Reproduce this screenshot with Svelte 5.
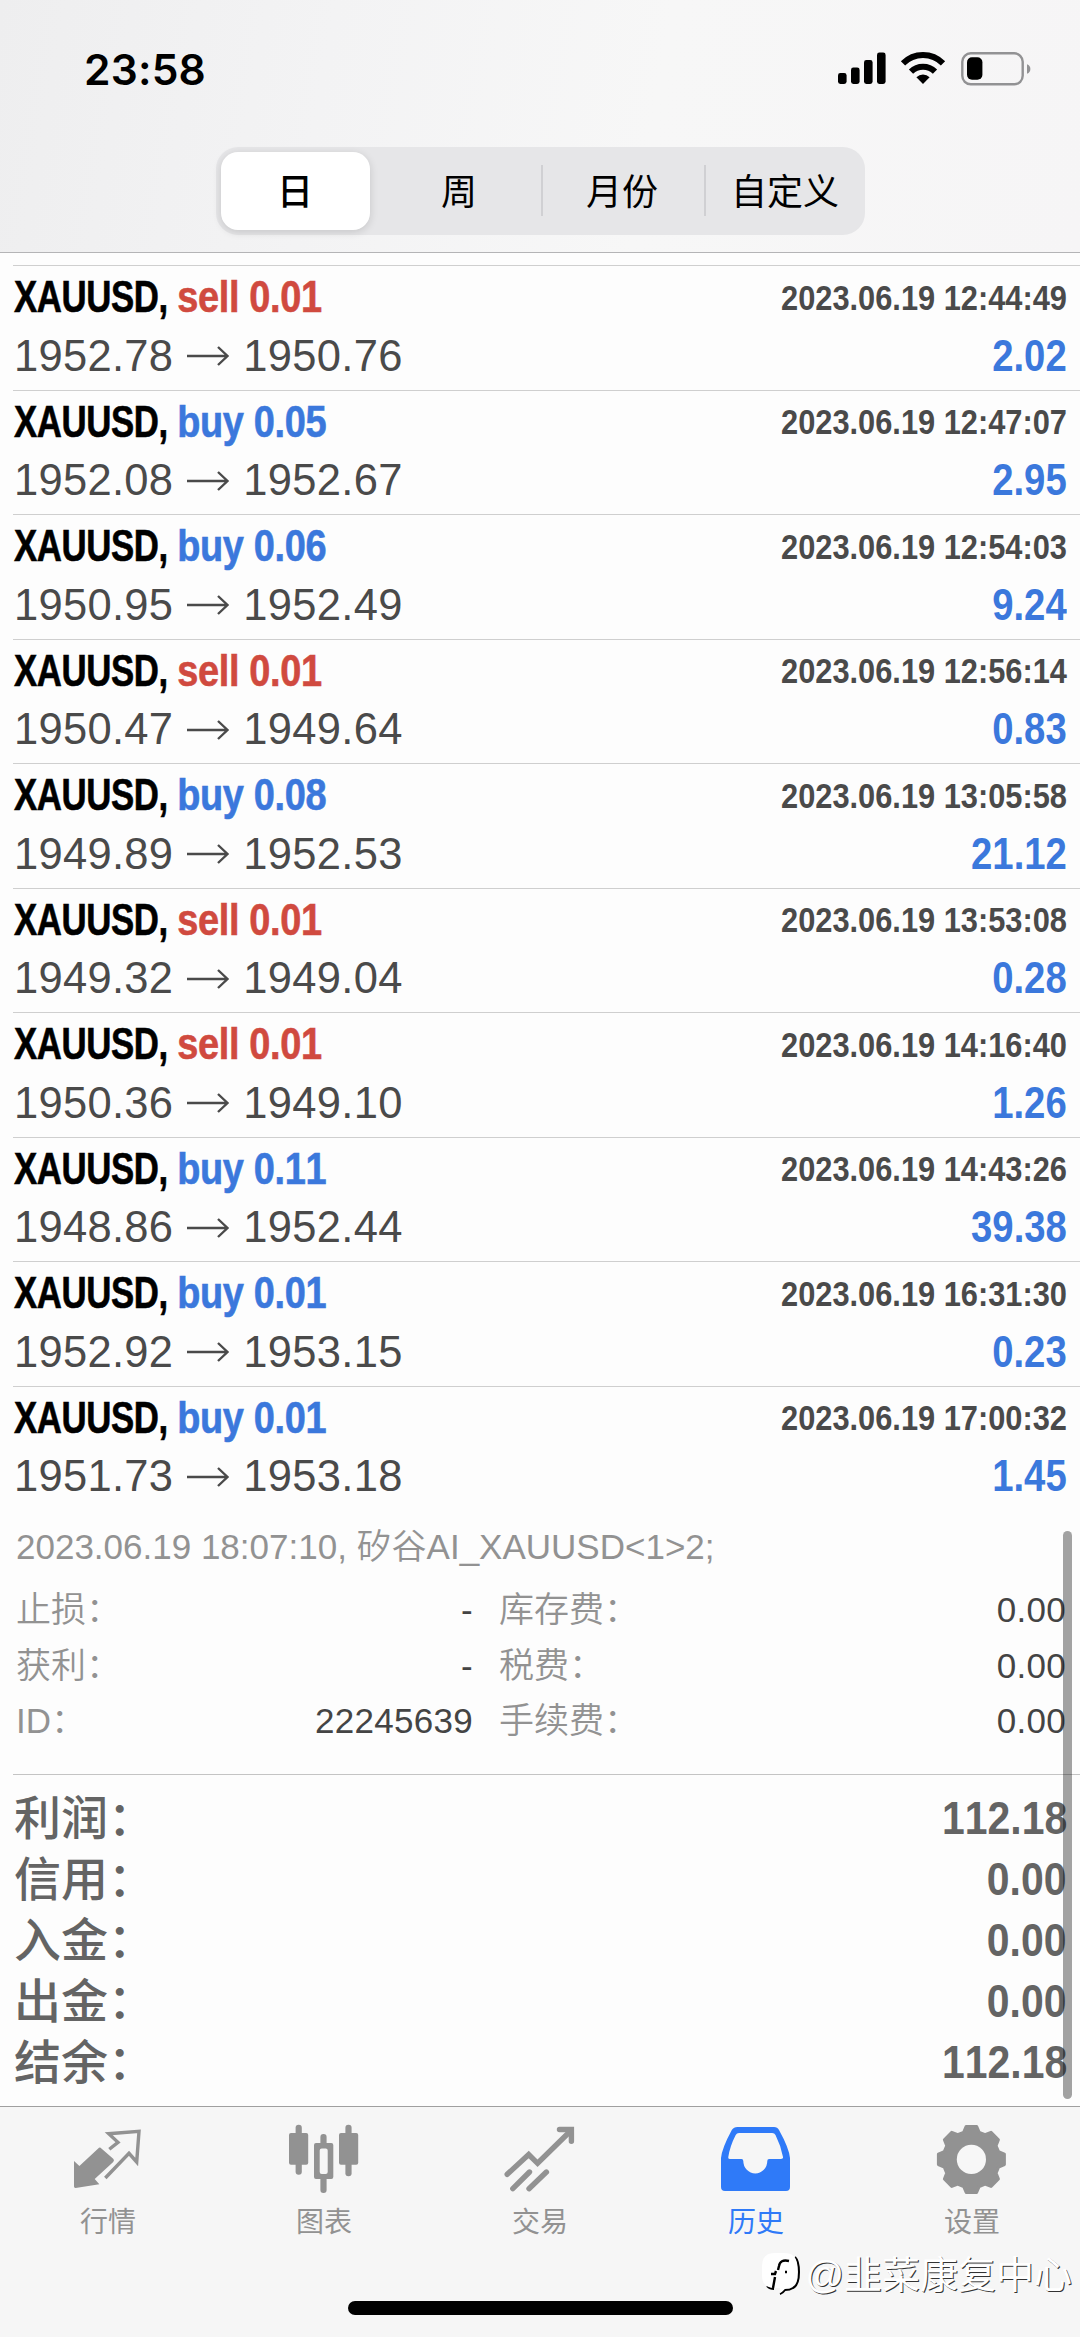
<script lang="ts">
    type Deal = {
        side: "buy" | "sell";
        volume: string;
        open: string;
        close: string;
        time: string;
        profit: string;
    };

    const periods = ["日", "周", "月份", "自定义"];
    let period = $state(0);

    const deals: Deal[] = [
        { side: "sell", volume: "0.01", open: "1952.78", close: "1950.76", time: "12:44:49", profit: "2.02" },
        { side: "buy", volume: "0.05", open: "1952.08", close: "1952.67", time: "12:47:07", profit: "2.95" },
        { side: "buy", volume: "0.06", open: "1950.95", close: "1952.49", time: "12:54:03", profit: "9.24" },
        { side: "sell", volume: "0.01", open: "1950.47", close: "1949.64", time: "12:56:14", profit: "0.83" },
        { side: "buy", volume: "0.08", open: "1949.89", close: "1952.53", time: "13:05:58", profit: "21.12" },
        { side: "sell", volume: "0.01", open: "1949.32", close: "1949.04", time: "13:53:08", profit: "0.28" },
        { side: "sell", volume: "0.01", open: "1950.36", close: "1949.10", time: "14:16:40", profit: "1.26" },
        { side: "buy", volume: "0.11", open: "1948.86", close: "1952.44", time: "14:43:26", profit: "39.38" },
        { side: "buy", volume: "0.01", open: "1952.92", close: "1953.15", time: "16:31:30", profit: "0.23" },
        { side: "buy", volume: "0.01", open: "1951.73", close: "1953.18", time: "17:00:32", profit: "1.45" },
    ];

    const details = [
        ["止损：", "-", "库存费：", "0.00"],
        ["获利：", "-", "税费：", "0.00"],
        ["ID：", "22245639", "手续费：", "0.00"],
    ];

    const totals = [
        ["利润：", "112.18"],
        ["信用：", "0.00"],
        ["入金：", "0.00"],
        ["出金：", "0.00"],
        ["结余：", "112.18"],
    ];

    const tabs = [
        { id: "quotes", label: "行情" },
        { id: "charts", label: "图表" },
        { id: "trade", label: "交易" },
        { id: "history", label: "历史" },
        { id: "settings", label: "设置" },
    ];
    let tab = $state("history");

    // eight teeth: two points on the tip, two in the valley
    const gear = Array.from({ length: 8 }, (_, i) => i * 45)
        .flatMap((a) => [
            [a - 9, 33.4],
            [a + 9, 33.4],
            [a + 16, 28.2],
            [a + 29, 28.2],
        ])
        .map(([a, r]) => {
            const t = (a * Math.PI) / 180;
            return `${(35.4 + r * Math.sin(t)).toFixed(2)},${(35.4 - r * Math.cos(t)).toFixed(2)}`;
        })
        .join(" ");
</script>

<div class="screen">
    <header>
        <div class="status">
            <span class="clock">23:58</span>
            <svg width="194" height="36" viewBox="0 0 194 36">
                <rect x="1" y="22" width="8.6" height="11" rx="2.4" />
                <rect x="14" y="16.5" width="8.6" height="16.5" rx="2.4" />
                <rect x="27" y="9" width="8.6" height="24" rx="2.4" />
                <rect x="40" y="1.5" width="8.6" height="31.5" rx="2.4" />
                <g fill="none" stroke="#000" stroke-width="6">
                    <path d="M66 12.4a28 28 0 0 1 40 0" />
                    <path d="M74 20.6a17 17 0 0 1 24 0" />
                </g>
                <path d="M86 33l-6.600-6.800a9.600 9.600 0 0 1 13.200 0z" />
                <rect x="125.3" y="2.3" width="60.4" height="31" rx="8.5" fill="none" stroke="#929294" stroke-width="2.4" />
                <rect x="130" y="6.2" width="15.4" height="22.6" rx="5" />
                <path d="M190 13.2c2.4 1 3.4 2.6 3.4 4.8s-1 3.8-3.4 4.8z" fill="#929294" />
            </svg>
        </div>
        <div class="segments">
            {#each periods as name, i}
                <button class="segment" class:active={period === i} onclick={() => (period = i)}>{name}</button>
            {/each}
        </div>
    </header>

    <main>
        {#each deals as deal}
            <section class="deal">
                <div class="head">
                    <div class="symbol">XAUUSD, <span class="side {deal.side}">{deal.side} {deal.volume}</span></div>
                    <div class="time">2023.06.19 {deal.time}</div>
                </div>
                <div class="body">
                    <div class="prices">
                        <span>{deal.open}</span>
                        <svg width="44" height="22" viewBox="0 0 44 22">
                            <path d="M1 11H41M32 2l9.5 9-9.5 9" />
                        </svg>
                        <span>{deal.close}</span>
                    </div>
                    <div class="profit">{deal.profit}</div>
                </div>
            </section>
        {/each}

        <section class="details">
            <div class="comment">2023.06.19 18:07:10, 矽谷AI_XAUUSD&lt;1&gt;2;</div>
            {#each details as [leftLabel, leftValue, rightLabel, rightValue]}
                <div class="detail">
                    <span>{leftLabel}</span>
                    <span class="value">{leftValue}</span>
                    <span class="second">{rightLabel}</span>
                    <span class="value">{rightValue}</span>
                </div>
            {/each}
        </section>

        <section class="totals">
            {#each totals as [label, value]}
                <div class="total">
                    <span>{label}</span>
                    <span class="sum">{value}</span>
                </div>
            {/each}
        </section>
        <div class="scrollbar"></div>
    </main>

    <footer>
        <nav>
            {#each tabs as item}
                <button class="tab" class:current={tab === item.id} onclick={() => (tab = item.id)}>
                    <svg width="72" height="72" viewBox="0 0 72 72">
                        {#if item.id === "quotes"}
                            <path d="M2 37l5.400 5 18.800-17.600q1.600-1.600 3.200 0l11.800 10.400q1.600 1.600 0 3.200L22.700 55l4.600 5.300L3.600 63.900Q2 64 2 62.500z" />
                            <path class="line thin" d="M37.3 25.3L46 18.3 36.7 9.7 67 7.3 64.7 38 57 29.3 33.3 54" />
                        {:else if item.id === "charts"}
                            <rect x="7.6" y=".7" width="6.2" height="50" rx="3" />
                            <rect x="1" y="9" width="19.2" height="31.8" rx="2" />
                            <rect x="57.4" y=".7" width="6.2" height="51.5" rx="3" />
                            <rect x="51" y="9" width="19.2" height="31.8" rx="2" />
                            <rect x="32.4" y="10" width="6.2" height="12" rx="3" />
                            <rect x="32.4" y="52" width="6.2" height="17" rx="3" />
                            <path fill-rule="evenodd" d="M28 19h15.300q2 0 2 2v32q0 2-2 2H28q-2 0-2-2V21q0-2 2-2zM31.700 26.500v21.500q0 2 2 2h4q2 0 2-2v-21.500q0-2-2-2h-4q-2 0-2 2z" />
                        {:else if item.id === "trade"}
                            <path class="line" d="M3.2 50.3L24.7 30.5 33.6 39.3 67 6.5" />
                            <path class="line" d="M55.5 5.5H67.4V17.3" />
                            <path class="line" d="M8.8 64.7L25.5 48M25 64.7L42.4 48" />
                        {:else if item.id === "history"}
                            <path
                                fill-rule="evenodd"
                                d="M17.500 3H54q3.500 0 5 3 10 18 11 28v29q0 4-4 4H5q-4 0-4-4V34Q2 24 11.800 6q1.900-3 5.700-3zM19 9q-2.300 0-3.300 2Q10 22 8.300 33q-.3 2 1.700 2h11.500q1.800 0 1.800 2a12 12.500 0 0 0 24 0q0-2 1.800-2H61q2.500 0 2-2Q61 22 55.500 11q-1-2-3.300-2z"
                            />
                        {:else}
                            <polygon points={gear} stroke="currentColor" stroke-width="3" stroke-linejoin="round" />
                            <circle cx="35.4" cy="35.4" r="14.6" fill="#f7f7f7" />
                        {/if}
                    </svg>
                    <span>{item.label}</span>
                </button>
            {/each}
        </nav>
        <div class="home"></div>
        <div class="watermark">
            <svg width="40" height="46" viewBox="0 0 40 46">
                <path d="M34 5q4 4 4 15 0 13-6 16-3 2-8 2-2 3-5 4M6 34q3 3 7 3" fill="none" stroke="#000" stroke-width="2" />
                <path d="M14 1h9q13 0 13 13v10q0 12-11 12l-6 5v-5h-5Q1 36 1 24V14Q1 1 14 1z" fill="#fff" />
                <path d="M28 9q-9-2-10 5l-1 4M10 22h4l1-3M24 20h2M14 25l-2 11" fill="none" stroke="#000" stroke-width="2.4" />
            </svg>
            <span>@韭菜康复中心</span>
        </div>
    </footer>
</div>

<style>
    :global(body) {
        background: #fff;
    }

    .screen {
        width: 1080px;
        height: 2337px;
        display: flex;
        flex-direction: column;
        overflow: hidden;
        background: #fdfdfd;
        color: #4a4a4a;
        font-family: "Liberation Sans", "Noto Sans CJK SC", sans-serif;
        font-kerning: none;
    }

    button {
        border: 0;
        padding: 0;
        background: none;
        font-family: inherit;
    }

    header {
        box-sizing: border-box;
        height: 253px;
        border-bottom: 1px solid #b4b4b6;
        background: linear-gradient(100deg, #eeeeef 0%, #f3f3f4 30%, #f7f7f7 60%, #f6f5f6 100%);
    }

    .status {
        height: 147px;
        display: flex;
        justify-content: space-between;
        align-items: flex-start;
        box-sizing: border-box;
        padding: 51px 49px 0 84px;
    }

    .clock {
        font: 600 42.5px/37px Inter, sans-serif;
        color: #000;
        letter-spacing: 0.2px;
    }

    .segments {
        width: 649px;
        height: 88px;
        margin: 0 auto;
        display: flex;
        box-sizing: border-box;
        padding: 5px;
        border-radius: 22px;
        background: #e6e6e8;
    }

    .segment {
        flex: none;
        width: 163px;
        padding-bottom: 4px;
        font-size: 36px;
        color: #000;
        position: relative;
    }

    .segment:nth-child(n + 3)::before {
        content: "";
        position: absolute;
        left: 0;
        top: 13px;
        width: 2px;
        height: 51px;
        background: #d0d0d3;
    }

    .active {
        width: 149px;
        margin-right: 8px;
        border-radius: 17px;
        background: #fff;
        font-weight: 500;
        box-shadow: 0 2px 8px rgba(0, 0, 0, 0.14);
    }

    main {
        flex: 1;
        padding-top: 12px;
        position: relative;
    }

    .deal {
        box-sizing: border-box;
        height: 124.5px;
        margin-left: 13px;
        border-top: 1px solid #cfcfcf;
    }

    .head,
    .body {
        display: flex;
        justify-content: space-between;
        align-items: center;
        padding-right: 13px;
        white-space: nowrap;
    }

    .head {
        height: 63px;
        font-weight: 700;
    }

    .body {
        height: 54px;
    }

    /* condensed bold face */
    .symbol {
        font-size: 43.5px;
        color: #000;
        letter-spacing: -0.5px;
        -webkit-text-stroke: 0.6px currentColor;
        transform: scaleX(0.8);
        transform-origin: left;
        margin-left: 1px;
    }

    .side {
        display: inline-block;
        letter-spacing: -0.4px;
        transform: scaleX(1.09);
        transform-origin: left;
    }

    .buy,
    .profit {
        color: #3b78dc;
    }

    .sell {
        color: #d04a3f;
    }

    .time {
        font-size: 35px;
        transform: scaleX(0.88);
        transform-origin: right;
    }

    .profit {
        font-size: 43.5px;
        font-weight: 700;
        transform: scaleX(0.88);
        transform-origin: right;
    }

    .prices {
        display: flex;
        align-items: center;
        font-size: 43.5px;
        letter-spacing: 0.3px;
        margin-left: 1px;
    }

    .prices svg {
        margin: 0 13px;
        fill: none;
        stroke: #4a4a4a;
        stroke-width: 2.4;
    }

    .details {
        box-sizing: border-box;
        height: 264px;
        padding: 0 14px 0 16px;
        font-size: 35px;
        color: #929292;
        font-weight: 350;
    }

    .comment {
        height: 72px;
        line-height: 73px;
    }

    .detail {
        height: 55.5px;
        line-height: 55px;
        display: grid;
        grid-template-columns: 160px 297px 1fr 200px;
    }

    .second {
        padding-left: 26px;
    }

    .value {
        text-align: right;
        color: #444;
        font-weight: 400;
        letter-spacing: 0.3px;
    }

    .totals {
        margin-left: 13px;
        padding: 13px 13px 0 1px;
        border-top: 1px solid #c4c4c4;
        color: #646464;
        font-weight: 500;
        font-size: 47px;
    }

    .total {
        display: flex;
        justify-content: space-between;
        height: 61px;
        line-height: 61px;
    }

    .sum {
        font-size: 46.5px;
        font-weight: 700;
        transform: scaleX(0.88);
        transform-origin: right;
    }

    .scrollbar {
        position: absolute;
        right: 8px;
        top: 1278px;
        width: 9px;
        height: 568px;
        border-radius: 5px;
        background: rgba(0, 0, 0, 0.36);
    }

    footer {
        box-sizing: border-box;
        height: 231px;
        border-top: 1px solid #9f9f9f;
        background: #f6f6f6;
        position: relative;
    }

    nav {
        display: flex;
        height: 194px;
    }

    .tab {
        width: 216px;
        display: flex;
        flex-direction: column;
        align-items: center;
        padding-top: 17px;
        font-size: 28px;
        line-height: 30px;
        color: #929292;
    }

    .tab svg {
        fill: currentColor;
        margin-bottom: 12px;
    }

    .tab .line {
        fill: none;
        stroke: currentColor;
        stroke-width: 5.4;
        stroke-linecap: round;
    }

    .tab .thin {
        stroke-width: 3.4;
        stroke-linecap: butt;
    }

    .current {
        color: #2f7af8;
    }

    .home {
        width: 385px;
        height: 14px;
        margin: 0 auto;
        border-radius: 7px;
        background: #000;
    }

    .watermark {
        position: absolute;
        right: 8px;
        top: 145px;
        display: flex;
        align-items: center;
        gap: 4px;
        font-size: 38px;
        line-height: 46px;
        color: #fff;
        text-shadow: 1px 1px 0 #333;
    }
</style>
